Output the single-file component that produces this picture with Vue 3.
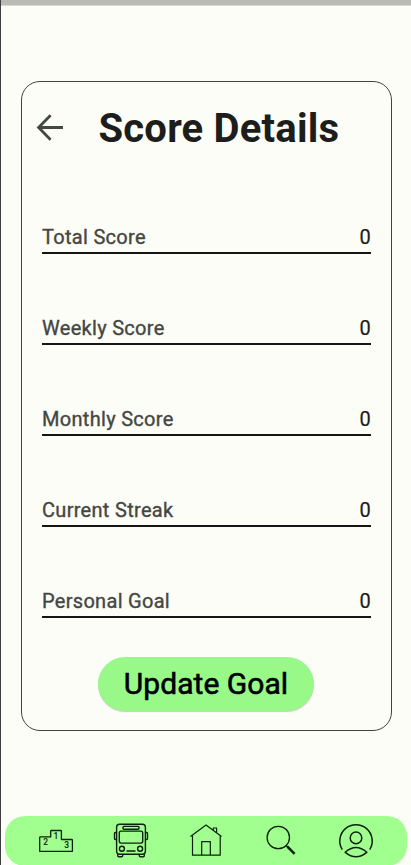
<script setup>
const rows = [
  { label: 'Total Score', value: 0 },
  { label: 'Weekly Score', value: 0 },
  { label: 'Monthly Score', value: 0 },
  { label: 'Current Streak', value: 0 },
  { label: 'Personal Goal', value: 0 },
]
</script>

<template>
  <div class="screen">
    <div class="status"></div>
    <main class="card">
      <header class="head">
        <svg class="back" viewBox="0 0 28 28" width="28" height="28">
          <path d="M27 13.500H3M14.600 1.300L2.600 13.500l12 12.200" />
        </svg>
        <h1>Score Details</h1>
      </header>
      <div class="rows">
        <div v-for="r in rows" :key="r.label" class="row">
          <span class="label">{{ r.label }}</span>
          <span class="value">{{ r.value }}</span>
        </div>
      </div>
      <button class="update">Update Goal</button>
    </main>
    <nav class="nav">
      <a>
        <svg viewBox="0 0 36 36" width="36" height="36" stroke-width="1.3">
          <path d="M1.700 28.300V14.600q0-.7.7-.7H12.700V8.200q0-.7.7-.7h9.300q.7 0 .7.7v8.300h10.300q.7 0 .7.7v11.100z" />
          <text x="7.600" y="22">2</text>
          <text x="18" y="16">1</text>
          <text x="28.700" y="24.800">3</text>
        </svg>
      </a>
      <a>
        <svg viewBox="0 0 36 36" width="36" height="36" stroke-width="1.400">
          <rect x="3.600" y="1.300" width="28.800" height="30" rx="3" />
          <rect x="10" y="3.400" width="16" height="2.800" rx="1" />
          <rect x="6.300" y="8.100" width="23.400" height="12" rx="1.800" />
          <circle cx="8.900" cy="25.800" r="2.500" />
          <circle cx="27.100" cy="25.800" r="2.500" />
          <path d="M13.500 28h9M3.600 9.500H2.300Q1.500 9.500 1.500 10.500v5q0 1 .8 1h1.300M32.400 9.500h1.300q.8 0 .8 1v5q0 1-.8 1h-1.300M4.700 31.300v1.500q0 1 1 1h3q1 0 1-1v-1.500M26.300 31.300v1.500q0 1 1 1h3q1 0 1-1v-1.500" />
        </svg>
      </a>
      <a>
        <svg viewBox="0 0 36 36" width="36" height="36" stroke-width="1.200">
          <path d="M2.500 13.500L18 2l15.500 11.500M4.500 12.500V32.200h27.700V12.500M13.700 32.200V18.700h8.600v13.500M25.300 7.200V5h3.300v4.700" />
        </svg>
      </a>
      <a>
        <svg viewBox="0 0 36 36" width="36" height="36" stroke-width="1.300">
          <circle cx="15.300" cy="14.500" r="11.200" />
          <path d="M23.100 22.500l2.100 2" />
          <path d="M24.400 23.600l7.200 7.300" stroke-width="2.600" />
        </svg>
      </a>
      <a>
        <svg viewBox="0 0 36 36" width="36" height="36" stroke-width="1.500">
          <path d="M4.300 26.600A16.200 16.200 0 1 1 31.700 26.600" />
          <circle cx="18" cy="14.900" r="5.800" />
          <path d="M7.200 29.300Q18 19.600 28.800 29.300Q18 38.100 7.200 29.300z" />
        </svg>
      </a>
    </nav>
  </div>
</template>

<style>
body {
  background: #fcfdf6;
}
</style>

<style scoped>
.screen {
  box-sizing: border-box;
  height: 865px;
  overflow: hidden;
  display: flex;
  flex-direction: column;
  border-left: 1px solid #3d3c40;
  background: #fcfdf6;
  font-family: Roboto, sans-serif;
}
.status {
  flex: none;
  height: 5px;
  background: #babbb4;
  border-bottom: 1px solid #d8d9d2;
}
.card {
  box-sizing: border-box;
  flex: none;
  width: 371px;
  height: 650px;
  margin: 75px 0 0 20px;
  padding: 0 20px;
  border: 1px solid #41433e;
  border-radius: 19px;
  display: flex;
  flex-direction: column;
}
.head {
  display: flex;
  align-items: center;
  height: 92px;
  margin-left: -6px;
}
.back {
  flex: none;
  fill: none;
  stroke: #434940;
  stroke-width: 2.8;
}
h1 {
  margin: 2px 0 0 34.5px;
  font-size: 40px;
  line-height: 48px;
  font-weight: 700;
  letter-spacing: 0.2px;
  color: #1c1d1c;
  white-space: nowrap;
}
.rows {
  margin-top: -11px;
}
.row {
  box-sizing: border-box;
  height: 91px;
  padding-bottom: 3px;
  border-bottom: 2px solid #151515;
  display: flex;
  align-items: flex-end;
  justify-content: space-between;
  font-size: 20px;
  line-height: 24px;
  letter-spacing: 0.3px;
}
.label {
  color: #444643;
  -webkit-text-stroke: 0.35px #444643;
}
.value {
  color: #1a1c19;
  -webkit-text-stroke: 0.2px #1a1c19;
}
.update {
  width: 216px;
  height: 54px;
  margin: 39px 0 0 56px;
  padding: 0;
  flex: none;
  border: 0;
  border-radius: 27px;
  background: #98f989;
  box-shadow: 0 1px 1px rgba(0, 0, 0, 0.2);
  font: 400 30px/54px Roboto, sans-serif;
  letter-spacing: 0.05px;
  -webkit-text-stroke: 0.6px #000;
  color: #000;
}
.nav {
  flex: none;
  width: 402px;
  height: 50px;
  margin: 85px 0 0 4px;
  border-radius: 20px;
  background: #a1ff90;
  display: grid;
  grid-template-columns: repeat(5, 75px);
  justify-content: center;
}
.nav a {
  display: flex;
  align-items: center;
  justify-content: center;
}
.nav svg {
  fill: none;
  stroke: #0b200a;
  stroke-linejoin: round;
}
.nav text {
  fill: #0b200a;
  stroke: none;
  font-size: 8.5px;
  font-weight: 500;
  text-anchor: middle;
}
</style>
